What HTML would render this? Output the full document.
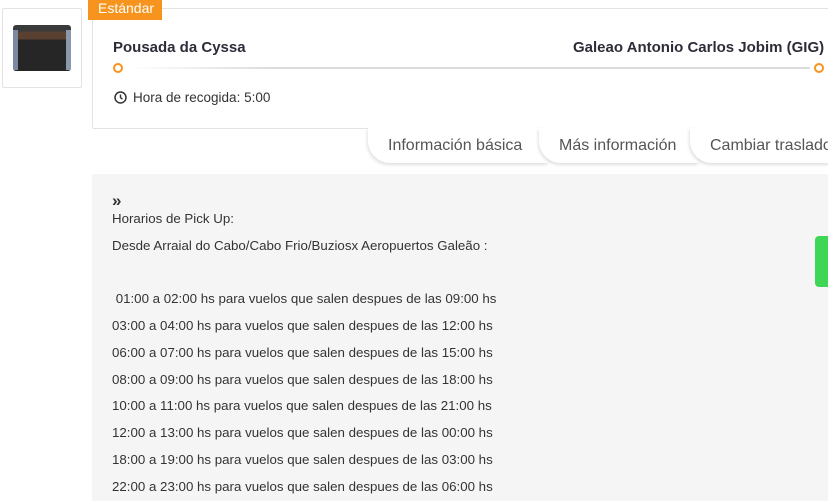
<!DOCTYPE html>
<html><head><meta charset="utf-8"><style>
*{margin:0;padding:0;box-sizing:border-box}
body{width:828px;height:501px;overflow:hidden;background:#fff;font-family:"Liberation Sans",sans-serif;color:#333;position:relative}
.thumb{position:absolute;left:2px;top:8px;width:80px;height:80px;border:1px solid #e3e3e3;border-radius:2px}
.thumb .img{position:absolute;left:10px;top:16px;width:58px;height:46px;border-radius:3px;background:linear-gradient(#3a3a3a 0 14%,#5a4030 14% 32%,#262626 32% 100%);overflow:hidden}
.thumb .img:before{content:"";position:absolute;left:0;top:5px;width:5px;height:40px;background:#7a8aa0}
.thumb .img:after{content:"";position:absolute;right:0;top:5px;width:5px;height:40px;background:#8a98aa}
.card{position:absolute;left:92px;top:8px;width:760px;height:121px;border:1px solid #e3e3e3;border-radius:2px}
.badge{position:absolute;left:88px;top:0;width:74px;height:20px;background:#f7941d;color:#fff;font-size:14px;line-height:17px;padding-left:10px}
.t{position:absolute;font-weight:bold;font-size:15px;color:#2d2d3a;white-space:nowrap}
.dot{position:absolute;width:10px;height:10px;border:2px solid #f7941d;border-radius:50%;background:#fff}
.line{position:absolute;left:130px;top:67px;width:680px;height:2px;background:linear-gradient(90deg,#fff,#ddd 20%,#ddd)}
.tab{position:absolute;top:128px;height:35px;background:#fff;border-bottom-left-radius:22px;box-shadow:-1px 2px 3px rgba(0,0,0,.12);font-size:16px;color:#555;line-height:36px;padding-left:20px;white-space:nowrap}
.gray{position:absolute;left:92px;top:174px;width:736px;height:327px;background:#f5f5f5}
.p{position:absolute;left:112px;font-size:13.3px;color:#333;white-space:nowrap}
.green{position:absolute;left:815px;top:236px;width:20px;height:51px;background:#3fd656;border-radius:4px}
</style></head><body>
<div class="thumb"><div class="img"></div></div>
<div class="card"></div>
<div class="badge">Estándar</div>
<div class="t" style="left:113px;top:39px">Pousada da Cyssa</div>
<div class="t" style="left:573px;top:39px">Galeao Antonio Carlos Jobim (GIG)</div>
<div class="line"></div>
<div class="dot" style="left:113px;top:63px"></div>
<div class="dot" style="left:814px;top:63px"></div>
<svg style="position:absolute;left:114px;top:91px" width="13" height="13" viewBox="0 0 13 13"><circle cx="6.5" cy="6.5" r="5.5" fill="none" stroke="#333" stroke-width="1.5"/><path d="M6.5 3.5v3.2l2 1.5" fill="none" stroke="#333" stroke-width="1.4"/></svg>
<div class="p" style="left:133px;top:90px;font-size:13.5px">Hora de recogida: 5:00</div>
<div class="tab" style="left:368px;width:180px">Información básica</div>
<div class="tab" style="left:539px;width:160px">Más información</div>
<div class="tab" style="left:690px;width:160px">Cambiar traslado</div>
<div class="gray"></div>
<div class="p" style="top:191px;font-size:17px;font-weight:bold">»</div>
<div class="p" style="top:211px">Horarios de Pick Up:</div>
<div class="p" style="top:238px">Desde Arraial do Cabo/Cabo Frio/Buziosx Aeropuertos Galeão :</div>
<div class="p" style="top:291px">&nbsp;01:00 a 02:00 hs para vuelos que salen despues de las 09:00 hs</div>
<div class="p" style="top:318px">03:00 a 04:00 hs para vuelos que salen despues de las 12:00 hs</div>
<div class="p" style="top:345px">06:00 a 07:00 hs para vuelos que salen despues de las 15:00 hs</div>
<div class="p" style="top:372px">08:00 a 09:00 hs para vuelos que salen despues de las 18:00 hs</div>
<div class="p" style="top:398px">10:00 a 11:00 hs para vuelos que salen despues de las 21:00 hs</div>
<div class="p" style="top:425px">12:00 a 13:00 hs para vuelos que salen despues de las 00:00 hs</div>
<div class="p" style="top:452px">18:00 a 19:00 hs para vuelos que salen despues de las 03:00 hs</div>
<div class="p" style="top:479px">22:00 a 23:00 hs para vuelos que salen despues de las 06:00 hs</div>
<div class="green"></div>
</body></html>
